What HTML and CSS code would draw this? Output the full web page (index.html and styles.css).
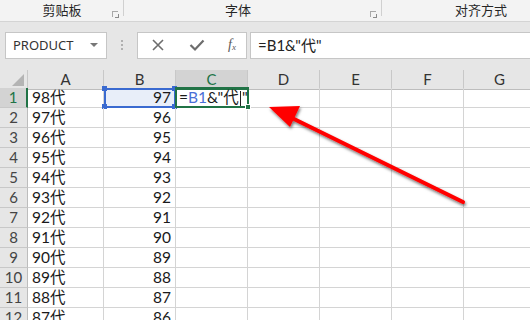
FILE: index.html
```html
<!DOCTYPE html>
<html>
<head>
<meta charset="utf-8">
<link rel="stylesheet" href="styles.css">
</head>
<body>
<div class="app">
  <div class="ribbon">
    <div class="grp g1"><span class="glabel">剪贴板</span><span class="launch"></span></div>
    <div class="grp g2"><span class="glabel">字体</span><span class="launch"></span></div>
    <div class="grp g3"><span class="glabel">对齐方式</span></div>
  </div>
  <div class="fbar">
    <div class="namebox"><span>PRODUCT</span><span class="caret"></span></div>
    <div class="dots"><i></i><i></i><i></i></div>
    <div class="fxbox">
      <svg class="ic" width="14" height="14" viewBox="0 0 14 14"><path d="M2 2 L12 12 M12 2 L2 12" stroke="#6d6d6d" stroke-width="1.6" fill="none"/></svg>
      <svg class="ic" width="16" height="14" viewBox="0 0 16 14"><path d="M1.5 7 L6 11.5 L14.5 2.5" stroke="#6d6d6d" stroke-width="2.2" fill="none"/></svg>
      <span class="fx">f<sub>x</sub></span>
    </div>
    <div class="input">=B1&amp;"代"</div>
  </div>
  <div class="sheet">
    <div class="row hdr">
      <div class="c rh corner"><span class="tri"></span></div>
      <div class="c ch">A</div><div class="c ch">B</div><div class="c ch sel">C</div><div class="c ch">D</div><div class="c ch">E</div><div class="c ch">F</div><div class="c ch">G</div>
    </div>
    <div class="row">
      <div class="c rh sel">1</div>
      <div class="c a">98代</div>
      <div class="c b ref">97<i class="h h1"></i><i class="h h2"></i><i class="h h3"></i><i class="h h4"></i></div>
      <div class="c active"><span class="eq">=</span><span class="bl">B1</span>&amp;"代<span class="cur"></span>"<i class="fill"></i></div>
      <div class="c"></div><div class="c"></div><div class="c"></div><div class="c"></div>
    </div>
    <div class="row"><div class="c rh">2</div><div class="c a">97代</div><div class="c b">96</div><div class="c"></div><div class="c"></div><div class="c"></div><div class="c"></div><div class="c"></div></div>
    <div class="row"><div class="c rh">3</div><div class="c a">96代</div><div class="c b">95</div><div class="c"></div><div class="c"></div><div class="c"></div><div class="c"></div><div class="c"></div></div>
    <div class="row"><div class="c rh">4</div><div class="c a">95代</div><div class="c b">94</div><div class="c"></div><div class="c"></div><div class="c"></div><div class="c"></div><div class="c"></div></div>
    <div class="row"><div class="c rh">5</div><div class="c a">94代</div><div class="c b">93</div><div class="c"></div><div class="c"></div><div class="c"></div><div class="c"></div><div class="c"></div></div>
    <div class="row"><div class="c rh">6</div><div class="c a">93代</div><div class="c b">92</div><div class="c"></div><div class="c"></div><div class="c"></div><div class="c"></div><div class="c"></div></div>
    <div class="row"><div class="c rh">7</div><div class="c a">92代</div><div class="c b">91</div><div class="c"></div><div class="c"></div><div class="c"></div><div class="c"></div><div class="c"></div></div>
    <div class="row"><div class="c rh">8</div><div class="c a">91代</div><div class="c b">90</div><div class="c"></div><div class="c"></div><div class="c"></div><div class="c"></div><div class="c"></div></div>
    <div class="row"><div class="c rh">9</div><div class="c a">90代</div><div class="c b">89</div><div class="c"></div><div class="c"></div><div class="c"></div><div class="c"></div><div class="c"></div></div>
    <div class="row"><div class="c rh">10</div><div class="c a">89代</div><div class="c b">88</div><div class="c"></div><div class="c"></div><div class="c"></div><div class="c"></div><div class="c"></div></div>
    <div class="row"><div class="c rh">11</div><div class="c a">88代</div><div class="c b">87</div><div class="c"></div><div class="c"></div><div class="c"></div><div class="c"></div><div class="c"></div></div>
    <div class="row"><div class="c rh">12</div><div class="c a">87代</div><div class="c b">86</div><div class="c"></div><div class="c"></div><div class="c"></div><div class="c"></div><div class="c"></div></div>
  </div>
  <svg class="arrow" width="530" height="320" viewBox="0 0 530 320">
    <defs>
      <filter id="sh" x="-20%" y="-20%" width="140%" height="140%">
        <feDropShadow dx="1" dy="2" stdDeviation="1.6" flood-color="#000" flood-opacity="0.55"/>
      </filter>
    </defs>
    <g filter="url(#sh)">
      <line x1="463" y1="202" x2="292" y2="118" stroke="#ff0000" stroke-width="4" stroke-linecap="round"/>
      <polygon points="269,107 300,106 290,127" fill="#ff0000"/>
    </g>
  </svg>
</div>
</body>
</html>
```
FILE: styles.css
```css
* { box-sizing: border-box; }
html, body { margin: 0; padding: 0; }
body { width: 530px; height: 320px; overflow: hidden; background: #fff; font-family: "Noto Sans", "Noto Sans CJK SC", sans-serif; }
.app { position: relative; width: 530px; height: 320px; overflow: hidden; }

.ribbon { display: flex; height: 22px; background: #f3f3f3; border-bottom: 1px solid #d4d4d4; }
.grp { position: relative; display: flex; align-items: center; justify-content: center; height: 100%; font-family: "Noto Sans CJK SC", sans-serif; font-size: 13px; color: #262626; }
.g1 { width: 124px; }
.g2 { width: 258px; }
.g3 { flex: 1; justify-content: flex-end; padding-right: 23px; }
.g1::after, .g2::after { content: ""; position: absolute; right: 0; top: 0; height: 16px; width: 1px; background: #d0d0d0; }
.glabel { line-height: 20px; margin-top: -2px; }
.g2 .glabel { margin-left: -30px; }
.launch { position: absolute; right: 6px; top: 11px; width: 6px; height: 6px; border-left: 1px solid #a8a8a8; border-top: 1px solid #a8a8a8; }
.launch::after { content: ""; position: absolute; right: -1px; bottom: -1px; width: 3px; height: 3px; border-right: 1px solid #8a8a8a; border-bottom: 1px solid #8a8a8a; }

.fbar { display: flex; align-items: center; height: 48px; background: #e6e6e6; padding: 0 0 2px 5px; }
.namebox { display: flex; align-items: center; justify-content: space-between; width: 102px; height: 27px; background: #fff; border: 1px solid #c6c6c6; padding: 0 8px 0 7px; font-size: 13px; color: #333; }
.caret { width: 0; height: 0; border-left: 4px solid transparent; border-right: 4px solid transparent; border-top: 4px solid #777; }
.dots { display: flex; flex-direction: column; gap: 2px; width: 30px; align-items: center; margin-left: 0; }
.dots i { width: 2px; height: 2px; background: #b0b0b0; }
.fxbox { display: flex; align-items: center; justify-content: space-between; width: 110px; height: 27px; background: #fff; border: 1px solid #c6c6c6; padding: 0 10px 0 13px; }
.fx { font-family: "Liberation Serif", serif; font-style: italic; font-size: 14px; color: #5a5a5a; }
.fx sub { font-size: 9px; vertical-align: -1px; }
.input { flex: 1; height: 27px; margin-left: 3px; background: #fff; border: 1px solid #c6c6c6; border-right: none; padding-left: 7px; line-height: 25px; font-family: "Lato", "Noto Sans CJK SC", sans-serif; font-size: 15px; color: #222; }

.sheet { display: flex; flex-direction: column; }
.row { display: grid; grid-template-columns: 28px 76px 72px 72px 72px 72px 72px 72px; height: 20px; }
.row.hdr { height: 18px; }
.c { position: relative; border-right: 1px solid #d4d4d4; border-bottom: 1px solid #d4d4d4; font-family: "Lato", "Noto Sans CJK SC", sans-serif; font-size: 15.5px; line-height: 19px; color: #1a1a1a; white-space: nowrap; }
.hdr .c { background: #e6e6e6; border-right-color: #c8c8c8; border-bottom-color: #bdbdbd; text-align: center; line-height: 18px; color: #333; font-size: 15px; }
.hdr .c.sel { background: #d3d3d3; border-bottom: 2px solid #217346; color: #217346; }
.rh { background: #e6e6e6; border-right-color: #bdbdbd; border-bottom-color: #c8c8c8; text-align: center; color: #444; font-size: 15px; }
.rh.sel { background: #d3d3d3; border-right: 2px solid #217346; color: #217346; }
.corner .tri { position: absolute; right: 3px; bottom: 3px; width: 0; height: 0; border-left: 12px solid transparent; border-bottom: 12px solid #b4b4b4; }
.a { padding-left: 4px; }
.b { text-align: right; padding-right: 4px; }
.ref { background: #e8eef9; outline: 2px solid #3a6ad0; outline-offset: -2px; }
.h { position: absolute; width: 5px; height: 5px; background: #3a6ad0; }
.h1 { left: -2px; top: -2px; } .h2 { right: -2px; top: -2px; } .h3 { left: -2px; bottom: -2px; } .h4 { right: -2px; bottom: -2px; }
.active { border: 2px solid #217346; margin: -1px 0 0 -1px; width: 74px; height: 21px; padding-left: 2px; line-height: 17px; z-index: 2; }
.bl { color: #4a6fd6; }
.cur { display: inline-block; width: 1px; height: 15px; background: #222; vertical-align: -3px; margin: 0 1px; }
.fill { position: absolute; right: -4px; bottom: -4px; width: 6px; height: 6px; background: #217346; border: 1px solid #fff; }

.arrow { position: absolute; left: 0; top: 0; pointer-events: none; z-index: 5; }
```
